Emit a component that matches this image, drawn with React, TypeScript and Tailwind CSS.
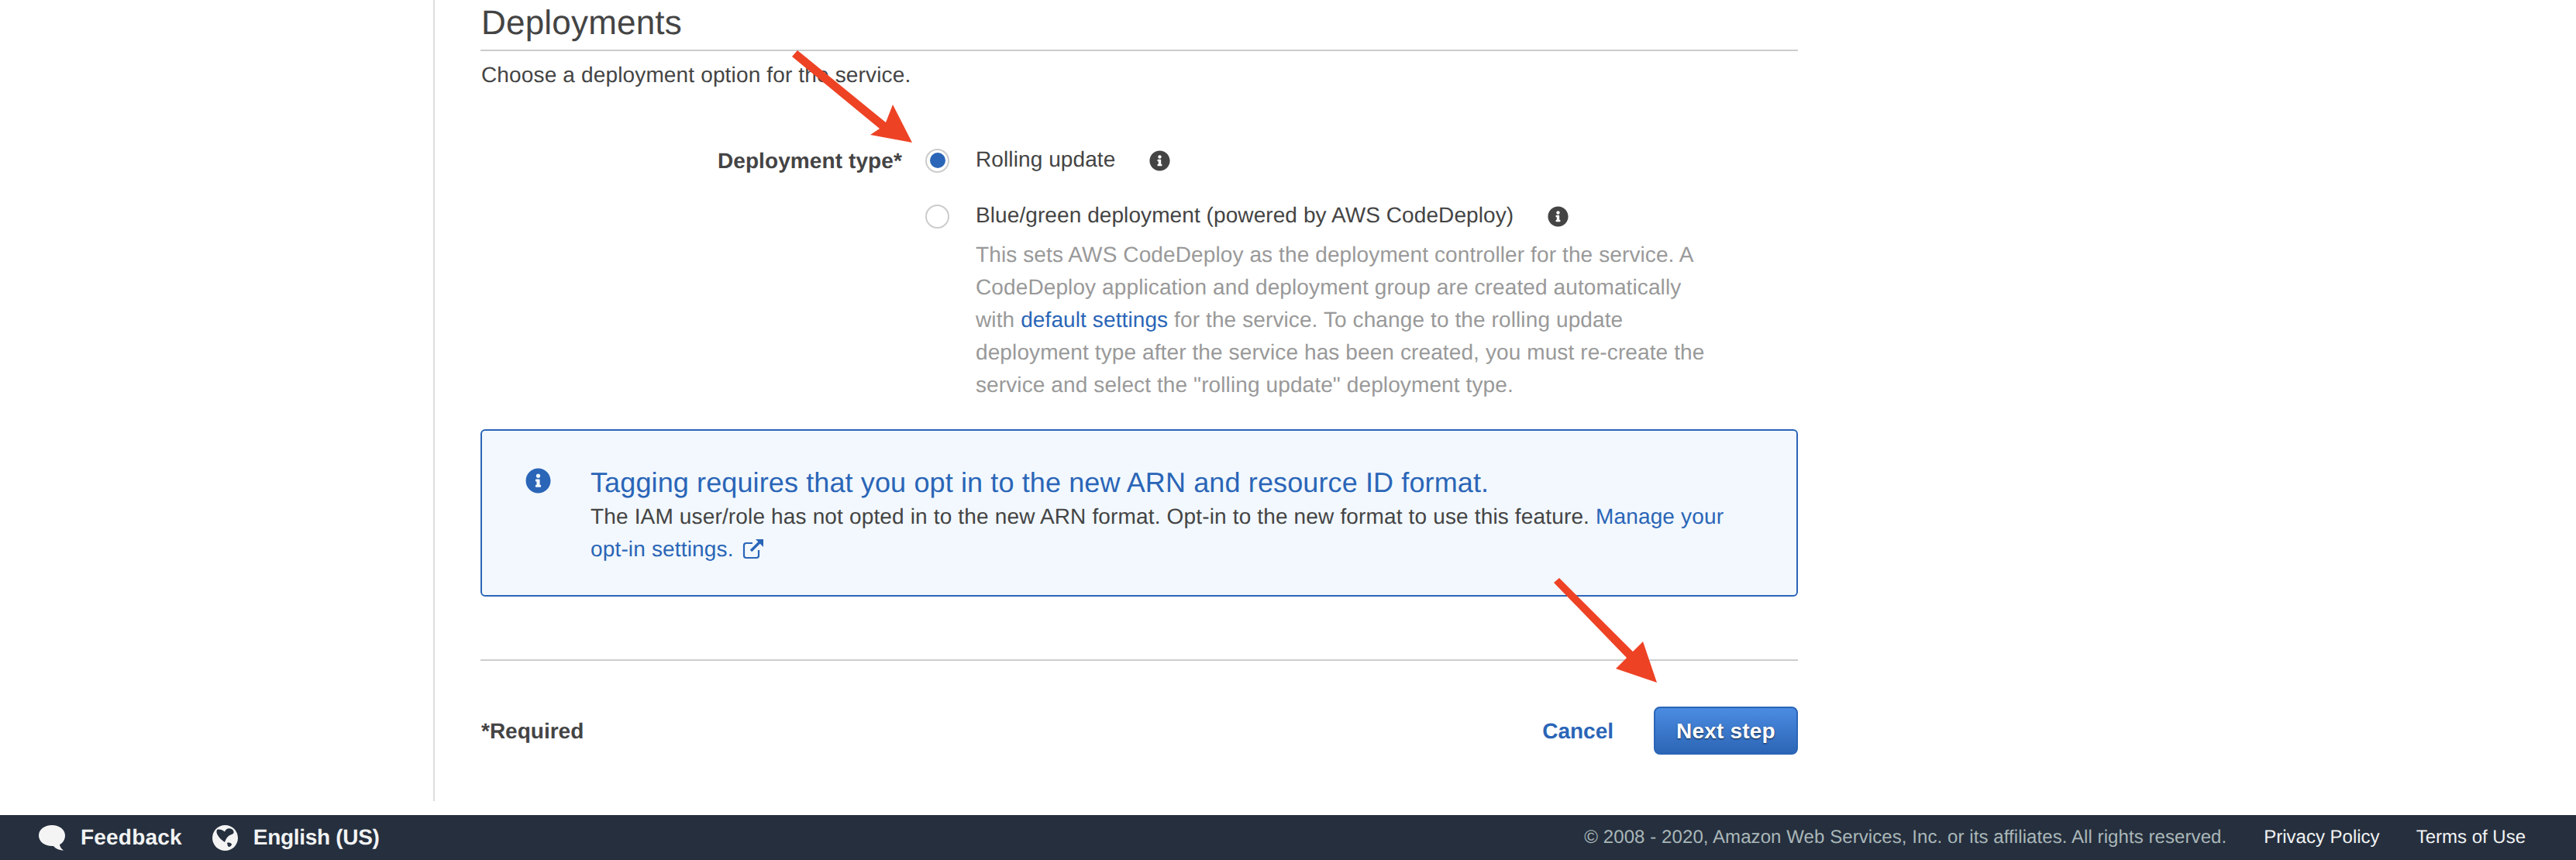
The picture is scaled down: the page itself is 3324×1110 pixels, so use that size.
import React from "react";
import { FaInfoCircle } from "react-icons/fa";

function Radio({ checked }: { checked?: boolean }) {
  return (
    <span className="flex h-[31px] w-[31px] shrink-0 items-center justify-center rounded-full border-2 border-[#cccccc] bg-white">
      {checked ? <span className="h-[20px] w-[20px] rounded-full bg-[#2a65b7]" /> : null}
    </span>
  );
}

export default function App() {
  return (
    <div className="relative flex h-[1110px] w-[3324px] flex-col overflow-hidden bg-white text-[28px] leading-[42px] text-[#444444] [font-family:'Liberation_Sans',Arial,sans-serif] [text-rendering:geometricPrecision]">
      <main className="ml-[559px] flex h-[1034px] w-[1761px] shrink-0 flex-col border-l-2 border-[#dddddd] pl-[59px]">
        <h2 className="h-[66px] border-b-2 border-[#cccccc] pl-[1px] pt-[2px] text-[44px] leading-[56px] tracking-[0.2px]">Deployments</h2>
        <p className="pl-[1px] pt-[10px] tracking-[0.15px]">Choose a deployment option for the service.</p>

        <div className="mt-[68px] flex">
          <div className="w-[544px] pt-[1px] text-right font-bold tracking-[0.1px]">Deployment type*</div>
          <div className="ml-[30px] flex flex-col">
            <div className="flex h-[42px] items-center">
              <Radio checked />
              <span className="ml-[34px] -mt-[2px] tracking-[0.1px]">Rolling update</span>
              <FaInfoCircle className="ml-[44px] text-[27px] text-[#444444]" />
            </div>
            <div className="mt-[30px] flex h-[42px] items-center">
              <Radio />
              <span className="ml-[34px] -mt-[2px] tracking-[0.085px]">Blue/green deployment (powered by AWS CodeDeploy)</span>
              <FaInfoCircle className="ml-[44px] text-[27px] text-[#444444]" />
            </div>
            <p className="ml-[65px] mt-[8px] tracking-[0.11px] text-[#999999]">
              This sets AWS CodeDeploy as the deployment controller for the service. A<br />
              CodeDeploy application and deployment group are created automatically<br />
              with <a className="text-[#2a65b7]">default settings</a> for the service. To change to the rolling update<br />
              deployment type after the service has been created, you must re-create the<br />
              service and select the "rolling update" deployment type.
            </p>
          </div>
        </div>

        <div className="mt-[36px] flex h-[216px] rounded-[6px] border-2 border-[#2a65b7] bg-[#f2f8fe] pl-[56px] pt-[44px]">
          <FaInfoCircle className="mt-[4px] shrink-0 text-[33px] text-[#2a65b7]" />
          <div className="ml-[51px]">
            <div className="text-[36px] leading-[46px] tracking-[0.12px] text-[#2a65b7]">Tagging requires that you opt in to the new ARN and resource ID format.</div>
            <div className="tracking-[0.155px]">
              The IAM user/role has not opted in to the new ARN format. Opt-in to the new format to use this feature. <a className="text-[#2a65b7]">Manage your</a><br />
              <a className="text-[#2a65b7]">
                opt-in settings.
                <svg viewBox="0 0 30 30" className="ml-[10px] inline-block h-[30px] w-[30px] align-[-5px]" fill="none" stroke="#2a65b7">
                  <path d="M22 17v7a3 3 0 0 1-3 3H6a3 3 0 0 1-3-3V11a3 3 0 0 1 3-3h8" strokeWidth="2.2" />
                  <path d="M12 18 25 5" strokeWidth="3.4" />
                  <path d="M18 3h10v10z" fill="#2a65b7" stroke="none" />
                </svg>
              </a>
            </div>
          </div>
        </div>

        <div className="mt-[81px] border-t-2 border-[#cccccc]" />

        <div className="mt-[59px] flex items-center justify-between">
          <span className="pl-[1px] pt-[2px] font-bold">*Required</span>
          <div className="flex items-center">
            <a className="pt-[2px] font-bold text-[#2a65b7]">Cancel</a>
            <button className="ml-[52px] h-[62px] w-[186px] rounded-[8px] border-2 border-[#2a65b7] bg-gradient-to-b from-[#4b8ce2] to-[#2c65b5] pt-[2px] font-bold tracking-[0.2px] text-white [text-shadow:0_1px_2px_rgba(0,0,0,0.7)]">
              Next step
            </button>
          </div>
        </div>
      </main>

      <footer className="mt-[18px] flex h-[58px] items-center justify-between bg-[#252f3e] pl-[50px] pr-[65px]">
        <div className="flex items-center font-bold text-[#f2f3f3]">
          <svg viewBox="0 0 34 33" className="h-[33px] w-[34px]" fill="#f4f4f4">
            <path d="M17 0C26.5 0 34 5.5 34 13.5C34 19 31 23 27 25C27.5 28 29 30.5 32 32.5C26 32.5 21.5 30 19 27C8 27.5 0 21.5 0 13.5C0 5.5 7.5 0 17 0Z" />
          </svg>
          <span className="ml-[20px] tracking-[0.2px]">Feedback</span>
          <svg viewBox="0 0 33 33" className="ml-[39px] h-[33px] w-[33px]">
            <circle cx="16.5" cy="16.5" r="16.5" fill="#f4f4f4" />
            <path d="M6 6C9 5 13 6 16 8.5C17 5 21 3 25 5C29 8 28 11 25 12C21 13 18 16 16 22C13 20 9 17 7 13C5.5 11 5 8 6 6Z" fill="#252f3e" />
            <path d="M19 23C21 22 25 23 25 25C24 28 21 29 20 27Z" fill="#252f3e" />
          </svg>
          <span className="ml-[20px] tracking-[-0.3px]">English (US)</span>
        </div>
        <div className="flex items-center text-[24px] text-[#f2f3f3]">
          <span className="tracking-[0.08px] text-[#aab7b8]">© 2008 - 2020, Amazon Web Services, Inc. or its affiliates. All rights reserved.</span>
          <a className="ml-[48px]">Privacy Policy</a>
          <a className="ml-[47px]">Terms of Use</a>
        </div>
      </footer>

      <svg className="pointer-events-none absolute left-0 top-0 h-[1110px] w-[3324px]" viewBox="0 0 3324 1110">
        <polygon fill="#ee4225" points="1022,73 1029,65 1143,158 1152,135 1177,184 1123,174 1135,166" />
        <polygon fill="#ee4225" points="2005,752 2012,746 2107,841 2120,828 2138,881 2085,863 2099,849" />
      </svg>
    </div>
  );
}
